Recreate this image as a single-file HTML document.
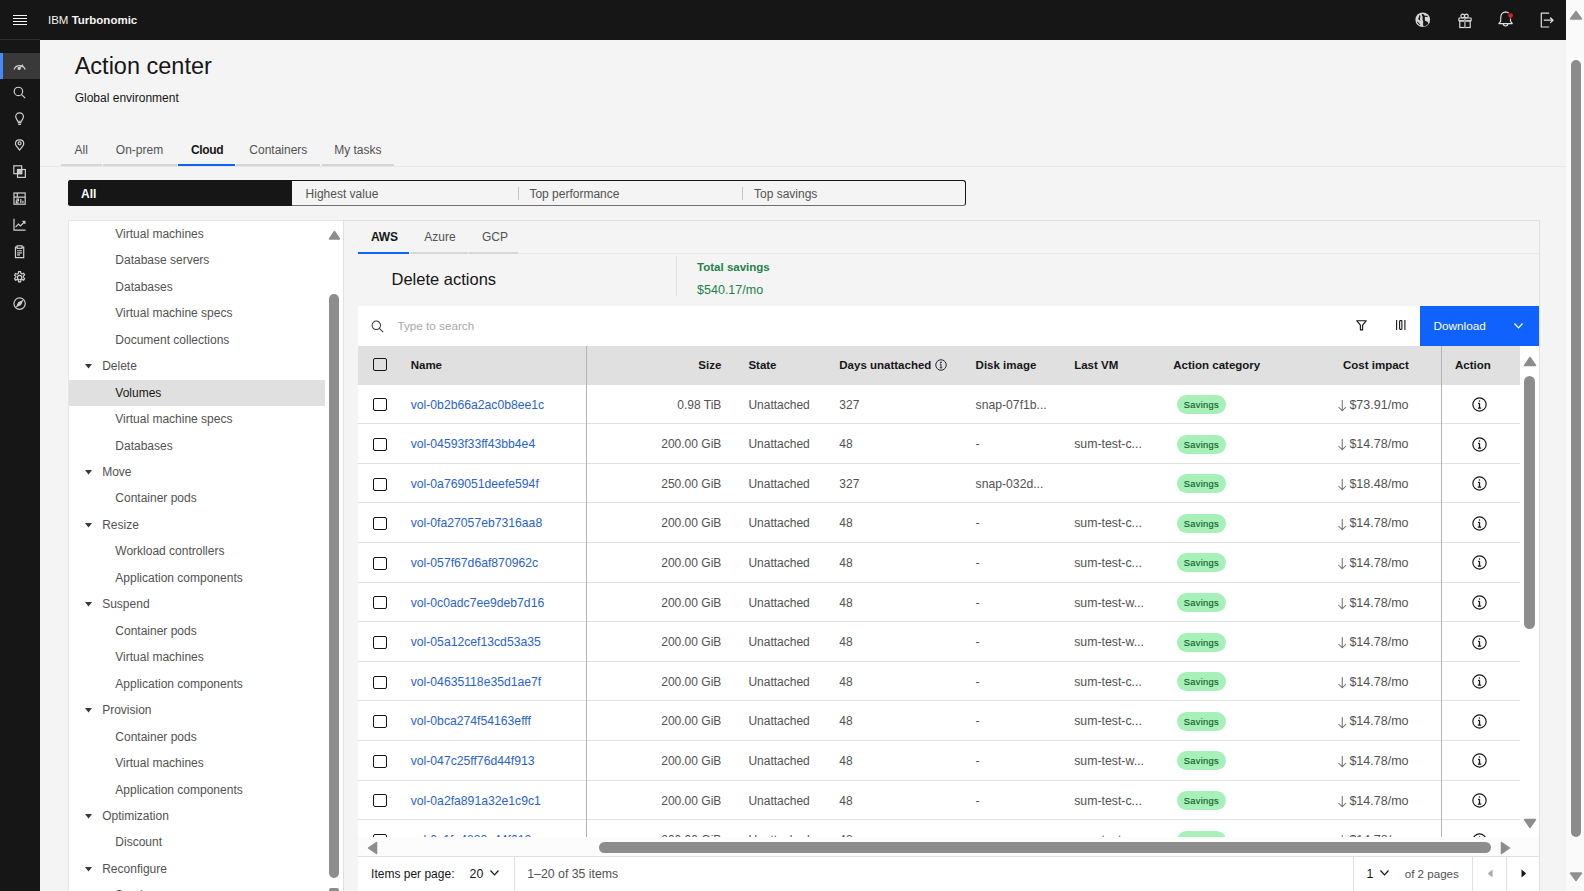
<!DOCTYPE html>
<html><head><meta charset="utf-8"><title>Action center</title>
<style>
html,body{margin:0;padding:0;width:1584px;height:891px;overflow:hidden;background:#f4f4f4;font-family:"Liberation Sans",sans-serif;}
.t{position:absolute;white-space:nowrap;}
.r{position:absolute;}
svg.r{overflow:visible;}
</style></head><body>
<div class="r" style="left:0.00px;top:0.00px;width:1566.00px;height:39.50px;background:#161616;"></div>
<div class="r" style="left:13.00px;top:15.00px;width:13.50px;height:1.20px;background:#f4f4f4;"></div>
<div class="r" style="left:13.00px;top:18.00px;width:13.50px;height:1.20px;background:#f4f4f4;"></div>
<div class="r" style="left:13.00px;top:21.00px;width:13.50px;height:1.20px;background:#f4f4f4;"></div>
<div class="r" style="left:13.00px;top:24.00px;width:13.50px;height:1.20px;background:#f4f4f4;"></div>
<div class="t" style="left:48.00px;top:15.00px;font-size:11.5px;line-height:11.5px;font-weight:400;color:#f4f4f4;">IBM <b style="font-weight:700">Turbonomic</b></div>
<svg class="r" style="left:1415px;top:11.8px" width="15.5" height="15.5" viewBox="0 0 16 16"><circle cx="8" cy="8" r="7.6" fill="#d6d6d6"/><path d="M7 2.3C7.8 2 9 2.2 9.6 3.6L13.2 4.1 12.8 5.1 10.3 5C10 6.5 10 8 10.6 9.2 12 9.6 13.6 10.4 13.8 11.5 13 13.2 11.2 14.5 9 14.9 8.2 13.6 8 12 8.6 10.6 8.4 9 7.4 8 7.8 6.5 8.1 5.5 7.8 4 7 3.3Z M4.8 2.6C4 4.2 4.3 5.8 3.3 7 3.7 8 4.6 8.6 5.6 9L5.3 8C4.8 7 5.7 5.6 5.5 4.4Z M2 10.2C2.8 11.6 3.8 12.8 5 13.6L5.4 12.8C4.5 12 3.3 11 2.5 9.8Z" fill="#161616"/></svg>
<svg class="r" style="left:1457.5px;top:12.5px" width="14" height="15" viewBox="0 0 14 15" fill="none" stroke="#e0e0e0" stroke-width="1.15"><rect x="0.9" y="5" width="12.2" height="2.9" rx=".3"/><rect x="1.8" y="7.9" width="10.4" height="6.6"/><path d="M6.9 5v9.5" stroke-width="1.7" stroke="#9a9a9a"/><circle cx="4.7" cy="2.9" r="1.8"/><circle cx="8.4" cy="2.9" r="1.8"/></svg>
<svg class="r" style="left:1498px;top:11px" width="16" height="17" viewBox="0 0 16 17" fill="none" stroke="#e0e0e0" stroke-width="1.15" stroke-linejoin="round"><path d="M0.9 12.6h13.4l-1.8-2.4V7C12.5 3.6 10.3 1.2 7.6 0.9 4.8 1.2 2.7 3.6 2.7 7v3.2z"/><path d="M5.2 12.6a2.4 2.4 0 0 0 4.8 0"/><circle cx="12.6" cy="4.6" r="3" fill="#161616" stroke="none"/><circle cx="12.6" cy="4.6" r="2.4" fill="#da1e28" stroke="none"/></svg>
<svg class="r" style="left:1539.5px;top:11.5px" width="15" height="16" viewBox="0 0 15 16" fill="none" stroke="#e0e0e0" stroke-width="1.2" stroke-linejoin="round"><path d="M9.2 1.1H1.3V15H9.2"/><path d="M3.8 8.2H13M10.2 5.5 13 8.2 10.2 10.9"/></svg>
<div class="r" style="left:1566.00px;top:0.00px;width:18.00px;height:891.00px;background:#fafafa;"></div>
<svg class="r" style="left:1569px;top:10px" width="14" height="10"><path d="M1.5 9 7 1.5 12.5 9z" fill="#909090" stroke="#909090" stroke-linejoin="round" stroke-width="1.5"/></svg>
<div class="r" style="left:1571.00px;top:60.00px;width:10.30px;height:776.50px;background:#8c8c8c;border-radius:5px"></div>
<svg class="r" style="left:1569px;top:872px" width="14" height="10"><path d="M1.5 1 7 8.5 12.5 1z" fill="#909090" stroke="#909090" stroke-linejoin="round" stroke-width="1.5"/></svg>
<div class="r" style="left:0.00px;top:39.50px;width:40.00px;height:851.50px;background:#161616;"></div>
<div class="r" style="left:0.00px;top:39.00px;width:40.00px;height:1.00px;background:#2e2e2e;"></div>
<div class="r" style="left:0.00px;top:53.00px;width:40.00px;height:26.00px;background:#393939;"></div>
<div class="r" style="left:0.00px;top:53.00px;width:2.60px;height:26.00px;background:#4589ff;"></div>
<svg class="r" style="left:13.1px;top:59.6px" width="13.2" height="13.2" viewBox="0 0 16 16" fill="none" stroke="#d0d0d0" stroke-width="1.45"><path d="M1.2 11.6A7.2 7.2 0 0 1 14.8 11.6"/><circle cx="7.4" cy="10.2" r="1.3" fill="#d4d4d4"/><path d="M8.2 9.4 12.2 5.8"/></svg>
<svg class="r" style="left:13.1px;top:85.6px" width="13.2" height="13.2" viewBox="0 0 16 16" fill="none" stroke="#d0d0d0" stroke-width="1.45"><circle cx="6.6" cy="6.6" r="5.1"/><path d="M10.4 10.4 14.8 14.8"/></svg>
<svg class="r" style="left:13.1px;top:111.6px" width="13.2" height="13.2" viewBox="0 0 16 16" fill="none" stroke="#d0d0d0" stroke-width="1.45"><path d="M5.6 11.2C5.6 9.5 3.3 8.5 3.3 5.6 3.3 3 5.4 1 8 1s4.7 2 4.7 4.6c0 2.9-2.3 3.9-2.3 5.6z"/><path d="M5.8 13h4.4M6.4 15h3.2"/></svg>
<svg class="r" style="left:13.1px;top:137.7px" width="13.2" height="13.2" viewBox="0 0 16 16" fill="none" stroke="#d0d0d0" stroke-width="1.45"><path d="M8 14.6 4 9.6C3.3 8.7 3 7.6 3 6.6 3 3.9 5.2 2.2 8 2.2s5 1.7 5 4.4c0 1-.3 2.1-1 3z"/><circle cx="8" cy="6.5" r="1.8"/></svg>
<svg class="r" style="left:13.1px;top:164.9px" width="13.2" height="13.2" viewBox="0 0 16 16" fill="none" stroke="#d0d0d0" stroke-width="1.45"><rect x="1" y="1" width="9.5" height="9.5"/><rect x="5.5" y="5.5" width="9.5" height="9.5"/><rect x="5.5" y="5.5" width="5" height="5" fill="#c6c6c6"/></svg>
<svg class="r" style="left:13.1px;top:191.6px" width="13.2" height="13.2" viewBox="0 0 16 16" fill="none" stroke="#d0d0d0" stroke-width="1.45"><rect x="1.2" y="1.2" width="13.6" height="13.6"/><path d="M1.2 6.2h13.6M5.2 1.2v5"/><path d="M4 8.6h2.6v2.2H4v2.4h2.8M9.5 8.6v4.6M12 10.5v2.7"/></svg>
<svg class="r" style="left:13.1px;top:218.0px" width="13.2" height="13.2" viewBox="0 0 16 16" fill="none" stroke="#d0d0d0" stroke-width="1.45"><path d="M1.2 1v13.8h14"/><path d="M3.2 11 6.6 7.4l2.4 2.2 5.4-5.4M11.4 4.2h3v3"/></svg>
<svg class="r" style="left:13.1px;top:244.5px" width="13.2" height="13.2" viewBox="0 0 16 16" fill="none" stroke="#d0d0d0" stroke-width="1.45"><path d="M5 2.6H3v12.6h10V2.6h-2"/><rect x="5" y="1" width="6" height="3"/><path d="M5 7h6M5 9.5h6M5 12h3.5"/></svg>
<svg class="r" style="left:13.1px;top:270.8px" width="13.2" height="13.2" viewBox="0 0 16 16" fill="none" stroke="#d0d0d0" stroke-width="1.45"><circle cx="8" cy="8" r="2.6"/><path d="M6.8.8h2.4l.4 2.1 1.3.7 2-.8 1.2 2-1.6 1.4v1.5l1.6 1.4-1.2 2-2-.8-1.3.7-.4 2.2H6.8l-.4-2.2-1.3-.7-2 .8-1.2-2 1.6-1.4V6.5L1.9 5.1l1.2-2 2 .8 1.3-.7z"/></svg>
<svg class="r" style="left:13.1px;top:297.1px" width="13.2" height="13.2" viewBox="0 0 16 16" fill="none" stroke="#d0d0d0" stroke-width="1.45"><circle cx="8" cy="8" r="6.9"/><path d="M11.2 4.8 9.2 9.2 4.8 11.2 6.8 6.8z" fill="#c6c6c6"/></svg>
<div class="r" style="left:40.00px;top:39.50px;width:1526.00px;height:851.50px;background:#f4f4f4;"></div>
<div class="t" style="left:74.70px;top:55.00px;font-size:23.5px;line-height:23.5px;font-weight:400;color:#161616;">Action center</div>
<div class="t" style="left:74.70px;top:92.00px;font-size:12px;line-height:12px;font-weight:400;color:#161616;">Global environment</div>
<div class="r" style="left:40.00px;top:166.00px;width:1526.00px;height:1.00px;background:#e8e8e8;"></div>
<div class="r" style="left:61.00px;top:164.00px;width:40.50px;height:2.00px;background:#d6d6d6;"></div>
<div class="r" style="left:103.00px;top:164.00px;width:73.50px;height:2.00px;background:#d6d6d6;"></div>
<div class="r" style="left:236.00px;top:164.00px;width:84.00px;height:2.00px;background:#d6d6d6;"></div>
<div class="r" style="left:321.50px;top:164.00px;width:72.50px;height:2.00px;background:#d6d6d6;"></div>
<div class="r" style="left:177.60px;top:164.00px;width:57.40px;height:2.00px;background:#0f62fe;"></div>
<div class="t" style="left:74.60px;top:144.00px;font-size:12px;line-height:12px;font-weight:400;color:#525252;">All</div>
<div class="t" style="left:115.80px;top:144.00px;font-size:12px;line-height:12px;font-weight:400;color:#525252;">On-prem</div>
<div class="t" style="left:190.90px;top:144.00px;font-size:12px;line-height:12px;font-weight:700;color:#161616;letter-spacing:-0.3px">Cloud</div>
<div class="t" style="left:249.30px;top:144.00px;font-size:12px;line-height:12px;font-weight:400;color:#525252;">Containers</div>
<div class="t" style="left:334.20px;top:144.00px;font-size:12px;line-height:12px;font-weight:400;color:#525252;">My tasks</div>
<div class="r" style="left:68.00px;top:180.00px;width:898.00px;height:26.00px;background:transparent;border:1px solid #161616;box-sizing:border-box;border-radius:3px;border-bottom-color:#6f6f6f"></div>
<div class="r" style="left:68.00px;top:180.00px;width:224.00px;height:26.00px;background:#161616;border-radius:3px 0 0 3px"></div>
<div class="t" style="left:81.00px;top:188.00px;font-size:12px;line-height:12px;font-weight:700;color:#ffffff;">All</div>
<div class="t" style="left:305.60px;top:188.00px;font-size:12px;line-height:12px;font-weight:400;color:#525252;">Highest value</div>
<div class="t" style="left:529.40px;top:188.00px;font-size:12px;line-height:12px;font-weight:400;color:#525252;">Top performance</div>
<div class="t" style="left:754.00px;top:188.00px;font-size:12px;line-height:12px;font-weight:400;color:#525252;">Top savings</div>
<div class="r" style="left:517.60px;top:186.50px;width:1.00px;height:13.00px;background:#c6c6c6;"></div>
<div class="r" style="left:741.50px;top:186.50px;width:1.00px;height:13.00px;background:#c6c6c6;"></div>
<div class="r" style="left:68.40px;top:219.80px;width:275.40px;height:671.20px;background:#ffffff;border:1px solid #e6e6e6;border-bottom:none;border-right:none;box-sizing:border-box"></div>
<div class="t" style="left:115.30px;top:228.00px;font-size:12px;line-height:12px;font-weight:400;color:#525252;">Virtual machines</div>
<div class="t" style="left:115.30px;top:254.00px;font-size:12px;line-height:12px;font-weight:400;color:#525252;">Database servers</div>
<div class="t" style="left:115.30px;top:281.00px;font-size:12px;line-height:12px;font-weight:400;color:#525252;">Databases</div>
<div class="t" style="left:115.30px;top:307.00px;font-size:12px;line-height:12px;font-weight:400;color:#525252;">Virtual machine specs</div>
<div class="t" style="left:115.30px;top:334.00px;font-size:12px;line-height:12px;font-weight:400;color:#525252;">Document collections</div>
<svg class="r" style="left:85px;top:364.20px" width="7" height="4.5"><path d="M0 0h7L3.5 4.5z" fill="#393939"/></svg>
<div class="t" style="left:102.20px;top:360.00px;font-size:12px;line-height:12px;font-weight:400;color:#525252;">Delete</div>
<div class="r" style="left:68.50px;top:379.86px;width:256.50px;height:26.00px;background:#e0e0e0;"></div>
<div class="t" style="left:115.30px;top:387.00px;font-size:12px;line-height:12px;font-weight:400;color:#161616;">Volumes</div>
<div class="t" style="left:115.30px;top:413.00px;font-size:12px;line-height:12px;font-weight:400;color:#525252;">Virtual machine specs</div>
<div class="t" style="left:115.30px;top:440.00px;font-size:12px;line-height:12px;font-weight:400;color:#525252;">Databases</div>
<svg class="r" style="left:85px;top:470.04px" width="7" height="4.5"><path d="M0 0h7L3.5 4.5z" fill="#393939"/></svg>
<div class="t" style="left:102.20px;top:466.00px;font-size:12px;line-height:12px;font-weight:400;color:#525252;">Move</div>
<div class="t" style="left:115.30px;top:492.00px;font-size:12px;line-height:12px;font-weight:400;color:#525252;">Container pods</div>
<svg class="r" style="left:85px;top:522.96px" width="7" height="4.5"><path d="M0 0h7L3.5 4.5z" fill="#393939"/></svg>
<div class="t" style="left:102.20px;top:519.00px;font-size:12px;line-height:12px;font-weight:400;color:#525252;">Resize</div>
<div class="t" style="left:115.30px;top:545.00px;font-size:12px;line-height:12px;font-weight:400;color:#525252;">Workload controllers</div>
<div class="t" style="left:115.30px;top:572.00px;font-size:12px;line-height:12px;font-weight:400;color:#525252;">Application components</div>
<svg class="r" style="left:85px;top:602.34px" width="7" height="4.5"><path d="M0 0h7L3.5 4.5z" fill="#393939"/></svg>
<div class="t" style="left:102.20px;top:598.00px;font-size:12px;line-height:12px;font-weight:400;color:#525252;">Suspend</div>
<div class="t" style="left:115.30px;top:625.00px;font-size:12px;line-height:12px;font-weight:400;color:#525252;">Container pods</div>
<div class="t" style="left:115.30px;top:651.00px;font-size:12px;line-height:12px;font-weight:400;color:#525252;">Virtual machines</div>
<div class="t" style="left:115.30px;top:678.00px;font-size:12px;line-height:12px;font-weight:400;color:#525252;">Application components</div>
<svg class="r" style="left:85px;top:708.18px" width="7" height="4.5"><path d="M0 0h7L3.5 4.5z" fill="#393939"/></svg>
<div class="t" style="left:102.20px;top:704.00px;font-size:12px;line-height:12px;font-weight:400;color:#525252;">Provision</div>
<div class="t" style="left:115.30px;top:731.00px;font-size:12px;line-height:12px;font-weight:400;color:#525252;">Container pods</div>
<div class="t" style="left:115.30px;top:757.00px;font-size:12px;line-height:12px;font-weight:400;color:#525252;">Virtual machines</div>
<div class="t" style="left:115.30px;top:784.00px;font-size:12px;line-height:12px;font-weight:400;color:#525252;">Application components</div>
<svg class="r" style="left:85px;top:814.02px" width="7" height="4.5"><path d="M0 0h7L3.5 4.5z" fill="#393939"/></svg>
<div class="t" style="left:102.20px;top:810.00px;font-size:12px;line-height:12px;font-weight:400;color:#525252;">Optimization</div>
<div class="t" style="left:115.30px;top:836.00px;font-size:12px;line-height:12px;font-weight:400;color:#525252;">Discount</div>
<svg class="r" style="left:85px;top:866.94px" width="7" height="4.5"><path d="M0 0h7L3.5 4.5z" fill="#393939"/></svg>
<div class="t" style="left:102.20px;top:863.00px;font-size:12px;line-height:12px;font-weight:400;color:#525252;">Reconfigure</div>
<div class="t" style="left:115.30px;top:889.00px;font-size:12px;line-height:12px;font-weight:400;color:#525252;">Service</div>
<svg class="r" style="left:327.5px;top:230px" width="13" height="10"><path d="M1.5 9 6.5 1.5 11.5 9z" fill="#8d8d8d" stroke="#8d8d8d" stroke-linejoin="round" stroke-width="1.5"/></svg>
<div class="r" style="left:328.80px;top:294.00px;width:10.50px;height:584.00px;background:#8d8d8d;border-radius:5.5px"></div>
<div class="r" style="left:328.80px;top:888.00px;width:10.50px;height:3.00px;background:#8d8d8d;border-radius:2px 2px 0 0"></div>
<div class="r" style="left:343.00px;top:219.80px;width:1196.80px;height:671.20px;background:#f4f4f4;border:1px solid #e0e0e0;border-bottom:none;box-sizing:border-box"></div>
<div class="r" style="left:357.50px;top:253.00px;width:1181.50px;height:1.00px;background:#e8e8e8;"></div>
<div class="r" style="left:410.60px;top:252.00px;width:57.40px;height:2.00px;background:#d6d6d6;"></div>
<div class="r" style="left:469.20px;top:252.00px;width:48.80px;height:2.00px;background:#d6d6d6;"></div>
<div class="r" style="left:357.70px;top:252.00px;width:51.70px;height:2.00px;background:#0f62fe;"></div>
<div class="t" style="left:371.00px;top:231.00px;font-size:12px;line-height:12px;font-weight:700;color:#161616;letter-spacing:-0.2px">AWS</div>
<div class="t" style="left:424.30px;top:231.00px;font-size:12px;line-height:12px;font-weight:400;color:#525252;">Azure</div>
<div class="t" style="left:482.00px;top:231.00px;font-size:12px;line-height:12px;font-weight:400;color:#525252;">GCP</div>
<div class="t" style="left:391.50px;top:271.00px;font-size:16.5px;line-height:16.5px;font-weight:400;color:#161616;">Delete actions</div>
<div class="r" style="left:676.00px;top:256.00px;width:1.00px;height:40.00px;background:#e0e0e0;"></div>
<div class="t" style="left:697.10px;top:262.00px;font-size:11.5px;line-height:11.5px;font-weight:700;color:#24804b;">Total savings</div>
<div class="t" style="left:697.10px;top:284.00px;font-size:12.5px;line-height:12.5px;font-weight:400;color:#24804b;">$540.17/mo</div>
<div class="r" style="left:357.50px;top:306.00px;width:1181.70px;height:39.80px;background:#ffffff;"></div>
<svg class="r" style="left:371px;top:320.2px" width="13" height="13" viewBox="0 0 16 16" fill="none" stroke="#393939" stroke-width="1.25"><circle cx="6.5" cy="6.5" r="5.2"/><path d="M10.3 10.3 15 15"/></svg>
<div class="t" style="left:397.50px;top:320.00px;font-size:11.7px;line-height:11.7px;font-weight:400;color:#a8a8a8;">Type to search</div>
<svg class="r" style="left:1355.5px;top:320px" width="11" height="10.5" viewBox="0 0 11 10.5" fill="none" stroke="#161616" stroke-width="1.15" stroke-linejoin="round"><path d="M.7.7h9.6L6.6 5.2v4.7H4.4V5.2z"/></svg>
<svg class="r" style="left:1395.8px;top:320.3px" width="9.5" height="10" viewBox="0 0 9.5 10" fill="none" stroke="#161616" stroke-width="1.1"><path d="M.6 0v10M8.9 0v10"/><rect x="3.6" y=".6" width="2.3" height="8.8" rx=".6"/></svg>
<div class="r" style="left:1420.00px;top:306.00px;width:119.20px;height:40.00px;background:#0f62fe;"></div>
<div class="t" style="left:1433.40px;top:321.00px;font-size:11.8px;line-height:11.8px;font-weight:400;color:#ffffff;">Download</div>
<svg class="r" style="left:1514px;top:323.2px" width="9" height="6" viewBox="0 0 9 6" fill="none" stroke="#ffffff" stroke-width="1.2"><path d="M.5.5 4.5 4.8 8.5.5"/></svg>
<div class="r" style="left:357.50px;top:345.80px;width:1181.70px;height:492.20px;background:#ffffff;"></div>
<div class="r" style="left:357.50px;top:345.80px;width:1162.50px;height:38.80px;background:#e0e0e0;"></div>
<div class="r" style="left:373.30px;top:358.20px;width:13.40px;height:13.20px;background:transparent;border:1.3px solid #161616;box-sizing:border-box;border-radius:2px"></div>
<div class="t" style="left:410.70px;top:360.00px;font-size:11.5px;line-height:11.5px;font-weight:700;color:#161616;">Name</div>
<div class="t" style="left:748.40px;top:360.00px;font-size:11.5px;line-height:11.5px;font-weight:700;color:#161616;">State</div>
<div class="t" style="left:839.30px;top:360.00px;font-size:11.5px;line-height:11.5px;font-weight:700;color:#161616;">Days unattached</div>
<div class="t" style="left:975.60px;top:360.00px;font-size:11.5px;line-height:11.5px;font-weight:700;color:#161616;">Disk image</div>
<div class="t" style="left:1074.20px;top:360.00px;font-size:11.5px;line-height:11.5px;font-weight:700;color:#161616;">Last VM</div>
<div class="t" style="left:1173.30px;top:360.00px;font-size:11.5px;line-height:11.5px;font-weight:700;color:#161616;">Action category</div>
<div class="t" style="left:1343.00px;top:360.00px;font-size:11.5px;line-height:11.5px;font-weight:700;color:#161616;">Cost impact</div>
<div class="t" style="left:1455.00px;top:360.00px;font-size:11.5px;line-height:11.5px;font-weight:700;color:#161616;">Action</div>
<div class="t" style="right:862.70px;top:360.00px;font-size:11.5px;line-height:11.5px;font-weight:700;color:#161616;">Size</div>
<svg class="r" style="left:934.5px;top:359px" width="12" height="12" viewBox="0 0 16 16" fill="none" stroke="#161616" stroke-width="1.2"><circle cx="8" cy="8" r="7"/><path d="M8 6.8v5M6.4 11.8h3.2M6.6 6.8H8" /><circle cx="8" cy="4.4" r=".6" fill="#161616"/></svg>
<div class="r" style="left:0;top:0;width:1584px;height:891px;clip-path:inset(384.6px 0 54px 0)"><div class="r" style="left:357.50px;top:423.20px;width:1162.50px;height:1.00px;background:#e0e0e0;"></div><div class="r" style="left:373.30px;top:398.30px;width:13.40px;height:13.20px;background:transparent;border:1.3px solid #161616;box-sizing:border-box;border-radius:2px"></div><div class="t" style="left:410.70px;top:399.00px;font-size:12.2px;line-height:12.2px;font-weight:400;color:#2a62d0;">vol-0b2b66a2ac0b8ee1c</div><div class="t" style="right:862.70px;top:399.00px;font-size:12px;line-height:12px;font-weight:400;color:#525252;">0.98 TiB</div><div class="t" style="left:748.40px;top:399.00px;font-size:12px;line-height:12px;font-weight:400;color:#525252;">Unattached</div><div class="t" style="left:839.30px;top:399.00px;font-size:12px;line-height:12px;font-weight:400;color:#525252;">327</div><div class="t" style="left:975.60px;top:399.00px;font-size:12.2px;line-height:12.2px;font-weight:400;color:#525252;">snap-07f1b...</div><div class="r" style="left:1176.50px;top:395.00px;width:49.10px;height:19.00px;background:#a7f0ba;border-radius:10px"></div><div class="t" style="left:1183.80px;top:401.00px;font-size:9.3px;line-height:9.3px;font-weight:400;color:#0e6027;letter-spacing:.3px;-webkit-text-stroke:.15px #0e6027">Savings</div><div class="t" style="right:175.50px;top:399.00px;font-size:12.5px;line-height:12.5px;font-weight:400;color:#525252;">$73.91/mo</div><svg class="r" style="left:1337.5px;top:399.80px" width="8.5" height="11.5" viewBox="0 0 8.5 11.5" fill="none" stroke="#6f6f6f" stroke-width="1.05"><path d="M4.25 0v10.8M.5 7 4.25 10.8 8 7"/></svg><svg class="r" style="left:1472px;top:397.00px" width="15" height="15" viewBox="0 0 16 16" fill="none" stroke="#161616" stroke-width="1.25"><circle cx="8" cy="8" r="7.1"/><path d="M8 6.6v5.3M6.2 11.9h3.6M6.4 6.8H8" stroke-width="1.4"/><circle cx="8" cy="4.3" r=".8" fill="#161616" stroke="none"/></svg><div class="r" style="left:357.50px;top:462.80px;width:1162.50px;height:1.00px;background:#e0e0e0;"></div><div class="r" style="left:373.30px;top:437.90px;width:13.40px;height:13.20px;background:transparent;border:1.3px solid #161616;box-sizing:border-box;border-radius:2px"></div><div class="t" style="left:410.70px;top:438.00px;font-size:12.2px;line-height:12.2px;font-weight:400;color:#2a62d0;">vol-04593f33ff43bb4e4</div><div class="t" style="right:862.70px;top:438.00px;font-size:12px;line-height:12px;font-weight:400;color:#525252;">200.00 GiB</div><div class="t" style="left:748.40px;top:438.00px;font-size:12px;line-height:12px;font-weight:400;color:#525252;">Unattached</div><div class="t" style="left:839.30px;top:438.00px;font-size:12px;line-height:12px;font-weight:400;color:#525252;">48</div><div class="t" style="left:975.60px;top:438.00px;font-size:12.2px;line-height:12.2px;font-weight:400;color:#525252;">-</div><div class="t" style="left:1074.20px;top:438.00px;font-size:12.3px;line-height:12.3px;font-weight:400;color:#525252;">sum-test-c...</div><div class="r" style="left:1176.50px;top:434.60px;width:49.10px;height:19.00px;background:#a7f0ba;border-radius:10px"></div><div class="t" style="left:1183.80px;top:441.00px;font-size:9.3px;line-height:9.3px;font-weight:400;color:#0e6027;letter-spacing:.3px;-webkit-text-stroke:.15px #0e6027">Savings</div><div class="t" style="right:175.50px;top:438.00px;font-size:12.5px;line-height:12.5px;font-weight:400;color:#525252;">$14.78/mo</div><svg class="r" style="left:1337.5px;top:439.40px" width="8.5" height="11.5" viewBox="0 0 8.5 11.5" fill="none" stroke="#6f6f6f" stroke-width="1.05"><path d="M4.25 0v10.8M.5 7 4.25 10.8 8 7"/></svg><svg class="r" style="left:1472px;top:436.60px" width="15" height="15" viewBox="0 0 16 16" fill="none" stroke="#161616" stroke-width="1.25"><circle cx="8" cy="8" r="7.1"/><path d="M8 6.6v5.3M6.2 11.9h3.6M6.4 6.8H8" stroke-width="1.4"/><circle cx="8" cy="4.3" r=".8" fill="#161616" stroke="none"/></svg><div class="r" style="left:357.50px;top:502.40px;width:1162.50px;height:1.00px;background:#e0e0e0;"></div><div class="r" style="left:373.30px;top:477.50px;width:13.40px;height:13.20px;background:transparent;border:1.3px solid #161616;box-sizing:border-box;border-radius:2px"></div><div class="t" style="left:410.70px;top:478.00px;font-size:12.2px;line-height:12.2px;font-weight:400;color:#2a62d0;">vol-0a769051deefe594f</div><div class="t" style="right:862.70px;top:478.00px;font-size:12px;line-height:12px;font-weight:400;color:#525252;">250.00 GiB</div><div class="t" style="left:748.40px;top:478.00px;font-size:12px;line-height:12px;font-weight:400;color:#525252;">Unattached</div><div class="t" style="left:839.30px;top:478.00px;font-size:12px;line-height:12px;font-weight:400;color:#525252;">327</div><div class="t" style="left:975.60px;top:478.00px;font-size:12.2px;line-height:12.2px;font-weight:400;color:#525252;">snap-032d...</div><div class="r" style="left:1176.50px;top:474.20px;width:49.10px;height:19.00px;background:#a7f0ba;border-radius:10px"></div><div class="t" style="left:1183.80px;top:480.00px;font-size:9.3px;line-height:9.3px;font-weight:400;color:#0e6027;letter-spacing:.3px;-webkit-text-stroke:.15px #0e6027">Savings</div><div class="t" style="right:175.50px;top:478.00px;font-size:12.5px;line-height:12.5px;font-weight:400;color:#525252;">$18.48/mo</div><svg class="r" style="left:1337.5px;top:479.00px" width="8.5" height="11.5" viewBox="0 0 8.5 11.5" fill="none" stroke="#6f6f6f" stroke-width="1.05"><path d="M4.25 0v10.8M.5 7 4.25 10.8 8 7"/></svg><svg class="r" style="left:1472px;top:476.20px" width="15" height="15" viewBox="0 0 16 16" fill="none" stroke="#161616" stroke-width="1.25"><circle cx="8" cy="8" r="7.1"/><path d="M8 6.6v5.3M6.2 11.9h3.6M6.4 6.8H8" stroke-width="1.4"/><circle cx="8" cy="4.3" r=".8" fill="#161616" stroke="none"/></svg><div class="r" style="left:357.50px;top:542.00px;width:1162.50px;height:1.00px;background:#e0e0e0;"></div><div class="r" style="left:373.30px;top:517.10px;width:13.40px;height:13.20px;background:transparent;border:1.3px solid #161616;box-sizing:border-box;border-radius:2px"></div><div class="t" style="left:410.70px;top:517.00px;font-size:12.2px;line-height:12.2px;font-weight:400;color:#2a62d0;">vol-0fa27057eb7316aa8</div><div class="t" style="right:862.70px;top:517.00px;font-size:12px;line-height:12px;font-weight:400;color:#525252;">200.00 GiB</div><div class="t" style="left:748.40px;top:517.00px;font-size:12px;line-height:12px;font-weight:400;color:#525252;">Unattached</div><div class="t" style="left:839.30px;top:517.00px;font-size:12px;line-height:12px;font-weight:400;color:#525252;">48</div><div class="t" style="left:975.60px;top:517.00px;font-size:12.2px;line-height:12.2px;font-weight:400;color:#525252;">-</div><div class="t" style="left:1074.20px;top:517.00px;font-size:12.3px;line-height:12.3px;font-weight:400;color:#525252;">sum-test-c...</div><div class="r" style="left:1176.50px;top:513.80px;width:49.10px;height:19.00px;background:#a7f0ba;border-radius:10px"></div><div class="t" style="left:1183.80px;top:520.00px;font-size:9.3px;line-height:9.3px;font-weight:400;color:#0e6027;letter-spacing:.3px;-webkit-text-stroke:.15px #0e6027">Savings</div><div class="t" style="right:175.50px;top:517.00px;font-size:12.5px;line-height:12.5px;font-weight:400;color:#525252;">$14.78/mo</div><svg class="r" style="left:1337.5px;top:518.60px" width="8.5" height="11.5" viewBox="0 0 8.5 11.5" fill="none" stroke="#6f6f6f" stroke-width="1.05"><path d="M4.25 0v10.8M.5 7 4.25 10.8 8 7"/></svg><svg class="r" style="left:1472px;top:515.80px" width="15" height="15" viewBox="0 0 16 16" fill="none" stroke="#161616" stroke-width="1.25"><circle cx="8" cy="8" r="7.1"/><path d="M8 6.6v5.3M6.2 11.9h3.6M6.4 6.8H8" stroke-width="1.4"/><circle cx="8" cy="4.3" r=".8" fill="#161616" stroke="none"/></svg><div class="r" style="left:357.50px;top:581.60px;width:1162.50px;height:1.00px;background:#e0e0e0;"></div><div class="r" style="left:373.30px;top:556.70px;width:13.40px;height:13.20px;background:transparent;border:1.3px solid #161616;box-sizing:border-box;border-radius:2px"></div><div class="t" style="left:410.70px;top:557.00px;font-size:12.2px;line-height:12.2px;font-weight:400;color:#2a62d0;">vol-057f67d6af870962c</div><div class="t" style="right:862.70px;top:557.00px;font-size:12px;line-height:12px;font-weight:400;color:#525252;">200.00 GiB</div><div class="t" style="left:748.40px;top:557.00px;font-size:12px;line-height:12px;font-weight:400;color:#525252;">Unattached</div><div class="t" style="left:839.30px;top:557.00px;font-size:12px;line-height:12px;font-weight:400;color:#525252;">48</div><div class="t" style="left:975.60px;top:557.00px;font-size:12.2px;line-height:12.2px;font-weight:400;color:#525252;">-</div><div class="t" style="left:1074.20px;top:557.00px;font-size:12.3px;line-height:12.3px;font-weight:400;color:#525252;">sum-test-c...</div><div class="r" style="left:1176.50px;top:553.40px;width:49.10px;height:19.00px;background:#a7f0ba;border-radius:10px"></div><div class="t" style="left:1183.80px;top:559.00px;font-size:9.3px;line-height:9.3px;font-weight:400;color:#0e6027;letter-spacing:.3px;-webkit-text-stroke:.15px #0e6027">Savings</div><div class="t" style="right:175.50px;top:557.00px;font-size:12.5px;line-height:12.5px;font-weight:400;color:#525252;">$14.78/mo</div><svg class="r" style="left:1337.5px;top:558.20px" width="8.5" height="11.5" viewBox="0 0 8.5 11.5" fill="none" stroke="#6f6f6f" stroke-width="1.05"><path d="M4.25 0v10.8M.5 7 4.25 10.8 8 7"/></svg><svg class="r" style="left:1472px;top:555.40px" width="15" height="15" viewBox="0 0 16 16" fill="none" stroke="#161616" stroke-width="1.25"><circle cx="8" cy="8" r="7.1"/><path d="M8 6.6v5.3M6.2 11.9h3.6M6.4 6.8H8" stroke-width="1.4"/><circle cx="8" cy="4.3" r=".8" fill="#161616" stroke="none"/></svg><div class="r" style="left:357.50px;top:621.20px;width:1162.50px;height:1.00px;background:#e0e0e0;"></div><div class="r" style="left:373.30px;top:596.30px;width:13.40px;height:13.20px;background:transparent;border:1.3px solid #161616;box-sizing:border-box;border-radius:2px"></div><div class="t" style="left:410.70px;top:597.00px;font-size:12.2px;line-height:12.2px;font-weight:400;color:#2a62d0;">vol-0c0adc7ee9deb7d16</div><div class="t" style="right:862.70px;top:597.00px;font-size:12px;line-height:12px;font-weight:400;color:#525252;">200.00 GiB</div><div class="t" style="left:748.40px;top:597.00px;font-size:12px;line-height:12px;font-weight:400;color:#525252;">Unattached</div><div class="t" style="left:839.30px;top:597.00px;font-size:12px;line-height:12px;font-weight:400;color:#525252;">48</div><div class="t" style="left:975.60px;top:597.00px;font-size:12.2px;line-height:12.2px;font-weight:400;color:#525252;">-</div><div class="t" style="left:1074.20px;top:597.00px;font-size:12.3px;line-height:12.3px;font-weight:400;color:#525252;">sum-test-w...</div><div class="r" style="left:1176.50px;top:593.00px;width:49.10px;height:19.00px;background:#a7f0ba;border-radius:10px"></div><div class="t" style="left:1183.80px;top:599.00px;font-size:9.3px;line-height:9.3px;font-weight:400;color:#0e6027;letter-spacing:.3px;-webkit-text-stroke:.15px #0e6027">Savings</div><div class="t" style="right:175.50px;top:597.00px;font-size:12.5px;line-height:12.5px;font-weight:400;color:#525252;">$14.78/mo</div><svg class="r" style="left:1337.5px;top:597.80px" width="8.5" height="11.5" viewBox="0 0 8.5 11.5" fill="none" stroke="#6f6f6f" stroke-width="1.05"><path d="M4.25 0v10.8M.5 7 4.25 10.8 8 7"/></svg><svg class="r" style="left:1472px;top:595.00px" width="15" height="15" viewBox="0 0 16 16" fill="none" stroke="#161616" stroke-width="1.25"><circle cx="8" cy="8" r="7.1"/><path d="M8 6.6v5.3M6.2 11.9h3.6M6.4 6.8H8" stroke-width="1.4"/><circle cx="8" cy="4.3" r=".8" fill="#161616" stroke="none"/></svg><div class="r" style="left:357.50px;top:660.80px;width:1162.50px;height:1.00px;background:#e0e0e0;"></div><div class="r" style="left:373.30px;top:635.90px;width:13.40px;height:13.20px;background:transparent;border:1.3px solid #161616;box-sizing:border-box;border-radius:2px"></div><div class="t" style="left:410.70px;top:636.00px;font-size:12.2px;line-height:12.2px;font-weight:400;color:#2a62d0;">vol-05a12cef13cd53a35</div><div class="t" style="right:862.70px;top:636.00px;font-size:12px;line-height:12px;font-weight:400;color:#525252;">200.00 GiB</div><div class="t" style="left:748.40px;top:636.00px;font-size:12px;line-height:12px;font-weight:400;color:#525252;">Unattached</div><div class="t" style="left:839.30px;top:636.00px;font-size:12px;line-height:12px;font-weight:400;color:#525252;">48</div><div class="t" style="left:975.60px;top:636.00px;font-size:12.2px;line-height:12.2px;font-weight:400;color:#525252;">-</div><div class="t" style="left:1074.20px;top:636.00px;font-size:12.3px;line-height:12.3px;font-weight:400;color:#525252;">sum-test-w...</div><div class="r" style="left:1176.50px;top:632.60px;width:49.10px;height:19.00px;background:#a7f0ba;border-radius:10px"></div><div class="t" style="left:1183.80px;top:639.00px;font-size:9.3px;line-height:9.3px;font-weight:400;color:#0e6027;letter-spacing:.3px;-webkit-text-stroke:.15px #0e6027">Savings</div><div class="t" style="right:175.50px;top:636.00px;font-size:12.5px;line-height:12.5px;font-weight:400;color:#525252;">$14.78/mo</div><svg class="r" style="left:1337.5px;top:637.40px" width="8.5" height="11.5" viewBox="0 0 8.5 11.5" fill="none" stroke="#6f6f6f" stroke-width="1.05"><path d="M4.25 0v10.8M.5 7 4.25 10.8 8 7"/></svg><svg class="r" style="left:1472px;top:634.60px" width="15" height="15" viewBox="0 0 16 16" fill="none" stroke="#161616" stroke-width="1.25"><circle cx="8" cy="8" r="7.1"/><path d="M8 6.6v5.3M6.2 11.9h3.6M6.4 6.8H8" stroke-width="1.4"/><circle cx="8" cy="4.3" r=".8" fill="#161616" stroke="none"/></svg><div class="r" style="left:357.50px;top:700.40px;width:1162.50px;height:1.00px;background:#e0e0e0;"></div><div class="r" style="left:373.30px;top:675.50px;width:13.40px;height:13.20px;background:transparent;border:1.3px solid #161616;box-sizing:border-box;border-radius:2px"></div><div class="t" style="left:410.70px;top:676.00px;font-size:12.2px;line-height:12.2px;font-weight:400;color:#2a62d0;">vol-04635118e35d1ae7f</div><div class="t" style="right:862.70px;top:676.00px;font-size:12px;line-height:12px;font-weight:400;color:#525252;">200.00 GiB</div><div class="t" style="left:748.40px;top:676.00px;font-size:12px;line-height:12px;font-weight:400;color:#525252;">Unattached</div><div class="t" style="left:839.30px;top:676.00px;font-size:12px;line-height:12px;font-weight:400;color:#525252;">48</div><div class="t" style="left:975.60px;top:676.00px;font-size:12.2px;line-height:12.2px;font-weight:400;color:#525252;">-</div><div class="t" style="left:1074.20px;top:676.00px;font-size:12.3px;line-height:12.3px;font-weight:400;color:#525252;">sum-test-c...</div><div class="r" style="left:1176.50px;top:672.20px;width:49.10px;height:19.00px;background:#a7f0ba;border-radius:10px"></div><div class="t" style="left:1183.80px;top:678.00px;font-size:9.3px;line-height:9.3px;font-weight:400;color:#0e6027;letter-spacing:.3px;-webkit-text-stroke:.15px #0e6027">Savings</div><div class="t" style="right:175.50px;top:676.00px;font-size:12.5px;line-height:12.5px;font-weight:400;color:#525252;">$14.78/mo</div><svg class="r" style="left:1337.5px;top:677.00px" width="8.5" height="11.5" viewBox="0 0 8.5 11.5" fill="none" stroke="#6f6f6f" stroke-width="1.05"><path d="M4.25 0v10.8M.5 7 4.25 10.8 8 7"/></svg><svg class="r" style="left:1472px;top:674.20px" width="15" height="15" viewBox="0 0 16 16" fill="none" stroke="#161616" stroke-width="1.25"><circle cx="8" cy="8" r="7.1"/><path d="M8 6.6v5.3M6.2 11.9h3.6M6.4 6.8H8" stroke-width="1.4"/><circle cx="8" cy="4.3" r=".8" fill="#161616" stroke="none"/></svg><div class="r" style="left:357.50px;top:740.00px;width:1162.50px;height:1.00px;background:#e0e0e0;"></div><div class="r" style="left:373.30px;top:715.10px;width:13.40px;height:13.20px;background:transparent;border:1.3px solid #161616;box-sizing:border-box;border-radius:2px"></div><div class="t" style="left:410.70px;top:715.00px;font-size:12.2px;line-height:12.2px;font-weight:400;color:#2a62d0;">vol-0bca274f54163efff</div><div class="t" style="right:862.70px;top:715.00px;font-size:12px;line-height:12px;font-weight:400;color:#525252;">200.00 GiB</div><div class="t" style="left:748.40px;top:715.00px;font-size:12px;line-height:12px;font-weight:400;color:#525252;">Unattached</div><div class="t" style="left:839.30px;top:715.00px;font-size:12px;line-height:12px;font-weight:400;color:#525252;">48</div><div class="t" style="left:975.60px;top:715.00px;font-size:12.2px;line-height:12.2px;font-weight:400;color:#525252;">-</div><div class="t" style="left:1074.20px;top:715.00px;font-size:12.3px;line-height:12.3px;font-weight:400;color:#525252;">sum-test-c...</div><div class="r" style="left:1176.50px;top:711.80px;width:49.10px;height:19.00px;background:#a7f0ba;border-radius:10px"></div><div class="t" style="left:1183.80px;top:718.00px;font-size:9.3px;line-height:9.3px;font-weight:400;color:#0e6027;letter-spacing:.3px;-webkit-text-stroke:.15px #0e6027">Savings</div><div class="t" style="right:175.50px;top:715.00px;font-size:12.5px;line-height:12.5px;font-weight:400;color:#525252;">$14.78/mo</div><svg class="r" style="left:1337.5px;top:716.60px" width="8.5" height="11.5" viewBox="0 0 8.5 11.5" fill="none" stroke="#6f6f6f" stroke-width="1.05"><path d="M4.25 0v10.8M.5 7 4.25 10.8 8 7"/></svg><svg class="r" style="left:1472px;top:713.80px" width="15" height="15" viewBox="0 0 16 16" fill="none" stroke="#161616" stroke-width="1.25"><circle cx="8" cy="8" r="7.1"/><path d="M8 6.6v5.3M6.2 11.9h3.6M6.4 6.8H8" stroke-width="1.4"/><circle cx="8" cy="4.3" r=".8" fill="#161616" stroke="none"/></svg><div class="r" style="left:357.50px;top:779.60px;width:1162.50px;height:1.00px;background:#e0e0e0;"></div><div class="r" style="left:373.30px;top:754.70px;width:13.40px;height:13.20px;background:transparent;border:1.3px solid #161616;box-sizing:border-box;border-radius:2px"></div><div class="t" style="left:410.70px;top:755.00px;font-size:12.2px;line-height:12.2px;font-weight:400;color:#2a62d0;">vol-047c25ff76d44f913</div><div class="t" style="right:862.70px;top:755.00px;font-size:12px;line-height:12px;font-weight:400;color:#525252;">200.00 GiB</div><div class="t" style="left:748.40px;top:755.00px;font-size:12px;line-height:12px;font-weight:400;color:#525252;">Unattached</div><div class="t" style="left:839.30px;top:755.00px;font-size:12px;line-height:12px;font-weight:400;color:#525252;">48</div><div class="t" style="left:975.60px;top:755.00px;font-size:12.2px;line-height:12.2px;font-weight:400;color:#525252;">-</div><div class="t" style="left:1074.20px;top:755.00px;font-size:12.3px;line-height:12.3px;font-weight:400;color:#525252;">sum-test-w...</div><div class="r" style="left:1176.50px;top:751.40px;width:49.10px;height:19.00px;background:#a7f0ba;border-radius:10px"></div><div class="t" style="left:1183.80px;top:757.00px;font-size:9.3px;line-height:9.3px;font-weight:400;color:#0e6027;letter-spacing:.3px;-webkit-text-stroke:.15px #0e6027">Savings</div><div class="t" style="right:175.50px;top:755.00px;font-size:12.5px;line-height:12.5px;font-weight:400;color:#525252;">$14.78/mo</div><svg class="r" style="left:1337.5px;top:756.20px" width="8.5" height="11.5" viewBox="0 0 8.5 11.5" fill="none" stroke="#6f6f6f" stroke-width="1.05"><path d="M4.25 0v10.8M.5 7 4.25 10.8 8 7"/></svg><svg class="r" style="left:1472px;top:753.40px" width="15" height="15" viewBox="0 0 16 16" fill="none" stroke="#161616" stroke-width="1.25"><circle cx="8" cy="8" r="7.1"/><path d="M8 6.6v5.3M6.2 11.9h3.6M6.4 6.8H8" stroke-width="1.4"/><circle cx="8" cy="4.3" r=".8" fill="#161616" stroke="none"/></svg><div class="r" style="left:357.50px;top:819.20px;width:1162.50px;height:1.00px;background:#e0e0e0;"></div><div class="r" style="left:373.30px;top:794.30px;width:13.40px;height:13.20px;background:transparent;border:1.3px solid #161616;box-sizing:border-box;border-radius:2px"></div><div class="t" style="left:410.70px;top:795.00px;font-size:12.2px;line-height:12.2px;font-weight:400;color:#2a62d0;">vol-0a2fa891a32e1c9c1</div><div class="t" style="right:862.70px;top:795.00px;font-size:12px;line-height:12px;font-weight:400;color:#525252;">200.00 GiB</div><div class="t" style="left:748.40px;top:795.00px;font-size:12px;line-height:12px;font-weight:400;color:#525252;">Unattached</div><div class="t" style="left:839.30px;top:795.00px;font-size:12px;line-height:12px;font-weight:400;color:#525252;">48</div><div class="t" style="left:975.60px;top:795.00px;font-size:12.2px;line-height:12.2px;font-weight:400;color:#525252;">-</div><div class="t" style="left:1074.20px;top:795.00px;font-size:12.3px;line-height:12.3px;font-weight:400;color:#525252;">sum-test-c...</div><div class="r" style="left:1176.50px;top:791.00px;width:49.10px;height:19.00px;background:#a7f0ba;border-radius:10px"></div><div class="t" style="left:1183.80px;top:797.00px;font-size:9.3px;line-height:9.3px;font-weight:400;color:#0e6027;letter-spacing:.3px;-webkit-text-stroke:.15px #0e6027">Savings</div><div class="t" style="right:175.50px;top:795.00px;font-size:12.5px;line-height:12.5px;font-weight:400;color:#525252;">$14.78/mo</div><svg class="r" style="left:1337.5px;top:795.80px" width="8.5" height="11.5" viewBox="0 0 8.5 11.5" fill="none" stroke="#6f6f6f" stroke-width="1.05"><path d="M4.25 0v10.8M.5 7 4.25 10.8 8 7"/></svg><svg class="r" style="left:1472px;top:793.00px" width="15" height="15" viewBox="0 0 16 16" fill="none" stroke="#161616" stroke-width="1.25"><circle cx="8" cy="8" r="7.1"/><path d="M8 6.6v5.3M6.2 11.9h3.6M6.4 6.8H8" stroke-width="1.4"/><circle cx="8" cy="4.3" r=".8" fill="#161616" stroke="none"/></svg><div class="r" style="left:357.50px;top:858.80px;width:1162.50px;height:1.00px;background:#e0e0e0;"></div><div class="r" style="left:373.30px;top:833.90px;width:13.40px;height:13.20px;background:transparent;border:1.3px solid #161616;box-sizing:border-box;border-radius:2px"></div><div class="t" style="left:410.70px;top:834.00px;font-size:12.2px;line-height:12.2px;font-weight:400;color:#2a62d0;">vol-0c1fa4832e44f013a</div><div class="t" style="right:862.70px;top:834.00px;font-size:12px;line-height:12px;font-weight:400;color:#525252;">200.00 GiB</div><div class="t" style="left:748.40px;top:834.00px;font-size:12px;line-height:12px;font-weight:400;color:#525252;">Unattached</div><div class="t" style="left:839.30px;top:834.00px;font-size:12px;line-height:12px;font-weight:400;color:#525252;">48</div><div class="t" style="left:975.60px;top:834.00px;font-size:12.2px;line-height:12.2px;font-weight:400;color:#525252;">-</div><div class="t" style="left:1074.20px;top:834.00px;font-size:12.3px;line-height:12.3px;font-weight:400;color:#525252;">sum-test-c...</div><div class="r" style="left:1176.50px;top:830.60px;width:49.10px;height:19.00px;background:#a7f0ba;border-radius:10px"></div><div class="t" style="left:1183.80px;top:837.00px;font-size:9.3px;line-height:9.3px;font-weight:400;color:#0e6027;letter-spacing:.3px;-webkit-text-stroke:.15px #0e6027">Savings</div><div class="t" style="right:175.50px;top:834.00px;font-size:12.5px;line-height:12.5px;font-weight:400;color:#525252;">$14.78/mo</div><svg class="r" style="left:1337.5px;top:835.40px" width="8.5" height="11.5" viewBox="0 0 8.5 11.5" fill="none" stroke="#6f6f6f" stroke-width="1.05"><path d="M4.25 0v10.8M.5 7 4.25 10.8 8 7"/></svg><svg class="r" style="left:1472px;top:832.60px" width="15" height="15" viewBox="0 0 16 16" fill="none" stroke="#161616" stroke-width="1.25"><circle cx="8" cy="8" r="7.1"/><path d="M8 6.6v5.3M6.2 11.9h3.6M6.4 6.8H8" stroke-width="1.4"/><circle cx="8" cy="4.3" r=".8" fill="#161616" stroke="none"/></svg></div>
<div class="r" style="left:586.00px;top:345.80px;width:1.00px;height:491.20px;background:#b4b4b4;"></div>
<div class="r" style="left:1441.00px;top:345.80px;width:1.00px;height:491.20px;background:#b4b4b4;"></div>
<div class="r" style="left:1520.00px;top:346.80px;width:19.20px;height:491.20px;background:#ffffff;"></div>
<svg class="r" style="left:1523px;top:356px" width="14" height="11"><path d="M1.5 9.5 7 1.5 12.5 9.5z" fill="#8d8d8d" stroke="#8d8d8d" stroke-linejoin="round" stroke-width="1.5"/></svg>
<div class="r" style="left:1524.30px;top:376.00px;width:10.70px;height:253.00px;background:#8d8d8d;border-radius:5.5px"></div>
<svg class="r" style="left:1523px;top:818px" width="14" height="11"><path d="M1.5 1.5 7 9.5 12.5 1.5z" fill="#8d8d8d" stroke="#8d8d8d" stroke-linejoin="round" stroke-width="1.5"/></svg>
<div class="r" style="left:357.50px;top:837.00px;width:1181.70px;height:19.00px;background:#fcfcfc;"></div>
<svg class="r" style="left:367px;top:840.5px" width="11" height="14"><path d="M9.5 1.5 1.5 7 9.5 12.5z" fill="#8d8d8d" stroke="#8d8d8d" stroke-linejoin="round" stroke-width="1.5"/></svg>
<div class="r" style="left:599.30px;top:841.50px;width:891.70px;height:11.00px;background:#8d8d8d;border-radius:5.5px"></div>
<svg class="r" style="left:1500px;top:840.5px" width="11" height="14"><path d="M1.5 1.5 9.5 7 1.5 12.5z" fill="#8d8d8d" stroke="#8d8d8d" stroke-linejoin="round" stroke-width="1.5"/></svg>
<div class="r" style="left:357.50px;top:855.70px;width:1181.70px;height:35.30px;background:#ffffff;border-top:1px solid #e0e0e0;box-sizing:border-box"></div>
<div class="t" style="left:371.10px;top:868.00px;font-size:12px;line-height:12px;font-weight:400;color:#161616;">Items per page:</div>
<div class="t" style="left:469.60px;top:868.00px;font-size:12.3px;line-height:12.3px;font-weight:400;color:#161616;">20</div>
<svg class="r" style="left:490px;top:870px" width="9" height="6" viewBox="0 0 9 6" fill="none" stroke="#161616" stroke-width="1.2"><path d="M.5.5 4.5 4.8 8.5.5"/></svg>
<div class="r" style="left:514.00px;top:856.50px;width:1.00px;height:34.50px;background:#e0e0e0;"></div>
<div class="t" style="left:527.30px;top:868.00px;font-size:12.3px;line-height:12.3px;font-weight:400;color:#525252;">1–20 of 35 items</div>
<div class="r" style="left:1353.00px;top:856.50px;width:1.00px;height:34.50px;background:#e0e0e0;"></div>
<div class="t" style="left:1366.50px;top:868.00px;font-size:12.3px;line-height:12.3px;font-weight:400;color:#161616;">1</div>
<svg class="r" style="left:1380px;top:870px" width="9" height="6" viewBox="0 0 9 6" fill="none" stroke="#161616" stroke-width="1.2"><path d="M.5.5 4.5 4.8 8.5.5"/></svg>
<div class="t" style="left:1404.70px;top:868.00px;font-size:11.6px;line-height:11.6px;font-weight:400;color:#525252;">of 2 pages</div>
<div class="r" style="left:1472.00px;top:856.50px;width:1.00px;height:34.50px;background:#e0e0e0;"></div>
<svg class="r" style="left:1487px;top:868.5px" width="6" height="9"><path d="M5.5.5 .8 4.5 5.5 8.5z" fill="#a8a8a8"/></svg>
<div class="r" style="left:1505.60px;top:856.50px;width:1.00px;height:34.50px;background:#e0e0e0;"></div>
<svg class="r" style="left:1520.5px;top:868.5px" width="6" height="9"><path d="M.5.5 5.2 4.5 .5 8.5z" fill="#161616"/></svg>
</body></html>
